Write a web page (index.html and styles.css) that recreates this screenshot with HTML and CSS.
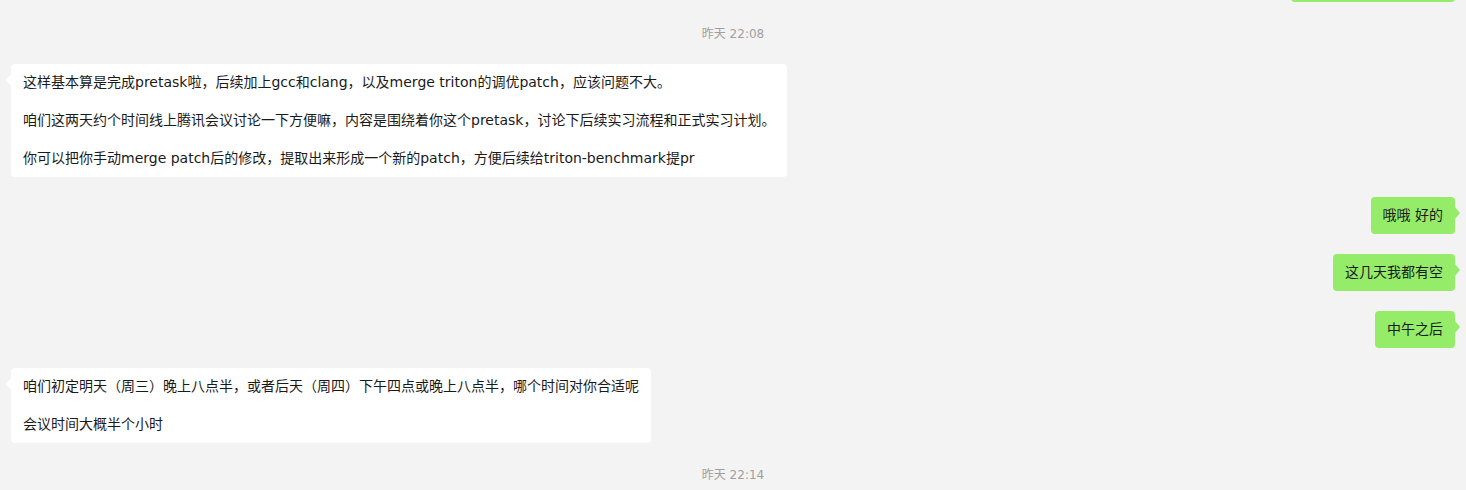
FILE: index.html
```html
<!DOCTYPE html>
<html lang="zh-CN">
<head>
  <meta charset="UTF-8">
  <meta name="viewport" content="width=device-width, initial-scale=1.0">
  <title>聊天记录</title>
  <link rel="stylesheet" href="styles.css">
</head>
<body>

  <div class="chat">
    <!-- balão anterior, quase todo fora da tela -->
    <div class="row out">
      <div class="bubble partial"></div>
    </div>

    <div class="time">昨天 22:08</div>

    <div class="row in">
      <div class="bubble">
        <p>这样基本算是完成pretask啦，后续加上gcc和clang，以及merge triton的调优patch，应该问题不大。</p>
        <p>咱们这两天约个时间线上腾讯会议讨论一下方便嘛，内容是围绕着你这个pretask，讨论下后续实习流程和正式实习计划。</p>
        <p>你可以把你手动merge patch后的修改，提取出来形成一个新的patch，方便后续给triton-benchmark提pr</p>
      </div>
    </div>

    <div class="row out">
      <div class="bubble"><p>哦哦 好的</p></div>
    </div>

    <div class="row out">
      <div class="bubble"><p>这几天我都有空</p></div>
    </div>

    <div class="row out">
      <div class="bubble"><p>中午之后</p></div>
    </div>

    <div class="row in">
      <div class="bubble">
        <p>咱们初定明天（周三）晚上八点半，或者后天（周四）下午四点或晚上八点半，哪个时间对你合适呢</p>
        <p>会议时间大概半个小时</p>
      </div>
    </div>

    <div class="time">昨天 22:14</div>
  </div>

</body>
</html>
```

FILE: styles.css
```css
body {
  margin: 0;
  padding: 0;
  height: 100vh;
  overflow: hidden;
  background-color: #f3f3f3;
  font-family: 'DejaVu Sans', 'Noto Sans CJK SC', sans-serif;
  color: #1a1a1a;
}

/* lista de mensagens, rolada um pouco para cima */
.chat {
  display: flex;
  flex-direction: column;
  gap: 20px;
  padding: 0 11px;
  margin-top: -35px;
}

.time {
  text-align: center;
  font-size: 12px;
  line-height: 20px;
  padding-top: 2px;
  color: #9f9f9f;
}

.row {
  display: flex;
}

.row.out {
  justify-content: flex-end;
}

.bubble {
  position: relative;
  max-width: 70%;
  padding: 9px 12px;
  border-radius: 4px;
  font-size: 14px;
}

.bubble.partial {
  width: 140px;
  height: 19px;
}

.bubble p {
  margin: 0;
  line-height: 19px;
}

.bubble p + p {
  margin-top: 19px;
}

.in .bubble {
  background-color: #ffffff;
}

.out .bubble {
  background-color: #95ec69;
}

/* setinha do balão */
.bubble::before {
  content: "";
  position: absolute;
  top: 10px;
  border-top: 6px solid transparent;
  border-bottom: 6px solid transparent;
}

.in .bubble::before {
  left: -5px;
  border-right: 5px solid #ffffff;
}

.out .bubble::before {
  right: -5px;
  border-left: 5px solid #95ec69;
}
```
